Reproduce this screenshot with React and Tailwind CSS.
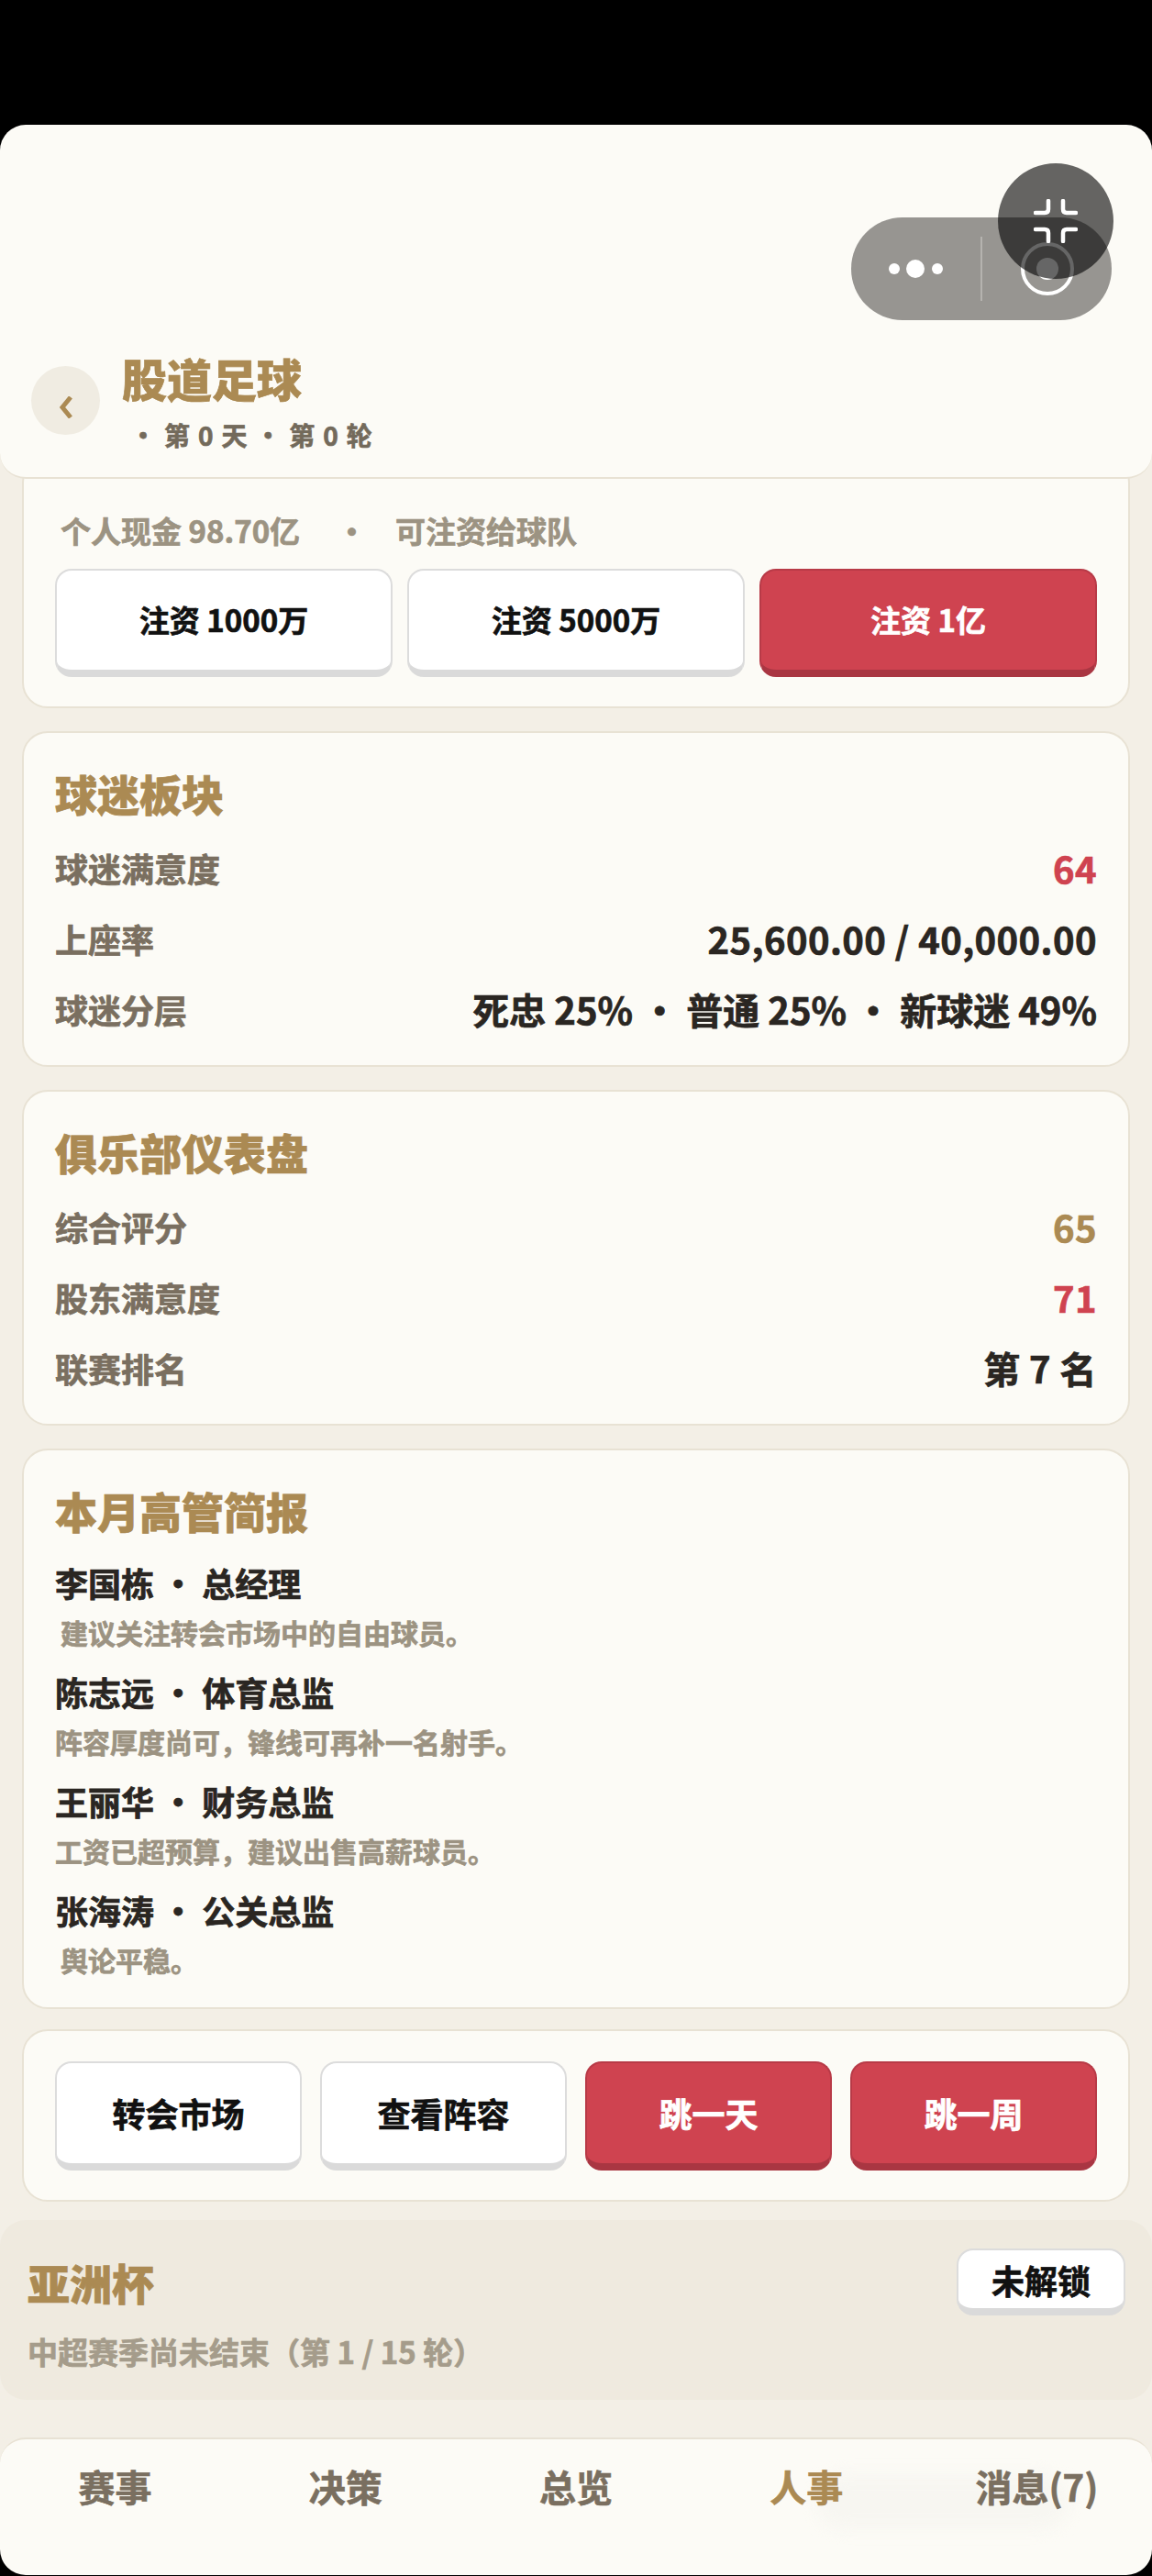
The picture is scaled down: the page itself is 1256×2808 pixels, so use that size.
import React from 'react';

const FONT = "font-['Noto_Sans_CJK_SC','Noto_Sans',sans-serif]";
// the installed CJK font stops at Bold, the reference is heavier
const HEAVY = '[-webkit-text-stroke:0.7px_currentColor]';

function Card({ className = '', children }) {
  return (
    <div className={`mx-6 shrink-0 rounded-[28px] border-2 border-[#e8e2d4] bg-[#fcfbf6] ${className}`}>
      {children}
    </div>
  );
}

function Btn({ red, className = '', children }) {
  return red ? (
    <button className={`rounded-[18px] border-2 border-[#b83a47] border-b-[8px] border-b-[#a93642] bg-[#cf4350] font-bold text-white ${HEAVY} ${className}`}>
      {children}
    </button>
  ) : (
    <button className={`rounded-[18px] border-2 border-[#dcdcdc] border-b-[8px] border-b-[#dadada] bg-white font-bold text-[#111] ${HEAVY} ${className}`}>
      {children}
    </button>
  );
}

function Row({ label, value, color = 'text-[#2a2622]', tight }) {
  return (
    <div className="flex h-[77px] items-center justify-between">
      <span className={`text-[36px] font-bold text-[#7a6f60] ${HEAVY}`}>{label}</span>
      <span className={`text-[40px] font-bold ${tight ? '' : 'tracking-[0.4px]'} ${color} ${HEAVY}`}>{value}</span>
    </div>
  );
}

function Section({ title, rows }) {
  return (
    <Card className="mt-[25px] h-[366px] px-[34px] pt-[29px]">
      <h2 className={`mb-[7px] h-[72px] text-[46px] leading-[72px] font-black text-[#ab8a53] ${HEAVY}`}>{title}</h2>
      {rows.map((r) => (
        <Row key={r.label} {...r} />
      ))}
    </Card>
  );
}

const briefs = [
  { who: '李国栋 · 总经理', say: '建议关注转会市场中的自由球员。', indent: true },
  { who: '陈志远 · 体育总监', say: '阵容厚度尚可，锋线可再补一名射手。' },
  { who: '王丽华 · 财务总监', say: '工资已超预算，建议出售高薪球员。' },
  { who: '张海涛 · 公关总监', say: '舆论平稳。', indent: true },
];

const tabs = ['赛事', '决策', '总览', '人事', '消息(7)'];

export default function App() {
  return (
    <div className={`relative flex h-[2808px] w-[1256px] flex-col overflow-hidden bg-[#f3efe6] ${FONT}`}>
      <div className="h-[136px] shrink-0 bg-black" />

      {/* header */}
      <div className="relative z-10 h-[386px] shrink-0 bg-[linear-gradient(#000_50%,transparent_50%)]">
        <header className="h-full rounded-[28px] border-b-2 border-[#e8e2d4] bg-[#fcfbf6]">
          <div className="flex h-full items-end pb-[24px] pl-[34px]">
            <div className="mb-[22px] flex h-[75px] w-[75px] items-center justify-center rounded-full bg-[#f0ece2]">
              <svg className="mt-[14px]" width="14" height="24" viewBox="0 0 14 24" fill="none">
                <path d="M12 1 L3 12 L12 23" stroke="#ab8a53" strokeWidth="5" />
              </svg>
            </div>
            <div className="ml-[24px]">
              <div className={`text-[49px] leading-[68px] font-black text-[#ab8a53] ${HEAVY}`}>股道足球</div>
              <div className={`mt-[6px] pl-[9px] text-[28px] leading-[44px] font-bold tracking-[1.3px] text-[#736a5b] ${HEAVY}`}>
                · 第 0 天 · 第 0 轮
              </div>
            </div>
          </div>
        </header>
      </div>

      {/* funding */}
      <Card className="-mt-[24px] h-[274px] px-[34px] pt-[24px]">
        <div className={`mt-[25px] flex h-[60px] items-center pl-[6px] text-[33px] font-bold text-[#9c9382] ${HEAVY}`}>
          <span>个人现金 98.70亿</span>
          <span className="ml-[40px]">·</span>
          <span className="ml-[31px]">可注资给球队</span>
        </div>
        <div className="mt-[11px] grid grid-cols-3 gap-[16px]">
          <Btn className="h-[118px] text-[33px]">注资 1000万</Btn>
          <Btn className="h-[118px] text-[33px]">注资 5000万</Btn>
          <Btn red className="h-[118px] text-[33px]">注资 1亿</Btn>
        </div>
      </Card>

      <Section
        title="球迷板块"
        rows={[
          { label: '球迷满意度', value: '64', color: 'text-[#cf4350]' },
          { label: '上座率', value: '25,600.00 / 40,000.00' },
          { label: '球迷分层', value: '死忠 25% · 普通 25% · 新球迷 49%', tight: true },
        ]}
      />
      <Section
        title="俱乐部仪表盘"
        rows={[
          { label: '综合评分', value: '65', color: 'text-[#ab8a53]' },
          { label: '股东满意度', value: '71', color: 'text-[#cf4350]' },
          { label: '联赛排名', value: '第 7 名' },
        ]}
      />

      {/* briefing */}
      <Card className="mt-[25px] h-[611px] px-[34px] pt-[29px]">
        <h2 className={`h-[72px] text-[46px] leading-[72px] font-black text-[#ab8a53] ${HEAVY}`}>本月高管简报</h2>
        <div className="mt-[18px] flex flex-col gap-[15px]">
          {briefs.map((b) => (
            <div key={b.who}>
              <div className={`h-[50px] text-[36px] leading-[50px] font-bold text-[#2a2622] ${HEAVY}`}>{b.who}</div>
              <div className={`mt-[4px] h-[50px] text-[30px] leading-[50px] font-bold text-[#9c9382] ${HEAVY} ${b.indent ? 'pl-[6px]' : ''}`}>
                {b.say}
              </div>
            </div>
          ))}
        </div>
      </Card>

      {/* actions */}
      <Card className="mt-[22px] grid h-[188px] grid-cols-4 items-center gap-[20px] px-[34px]">
        <Btn className="h-[119px] text-[36px]">转会市场</Btn>
        <Btn className="h-[119px] text-[36px]">查看阵容</Btn>
        <Btn red className="h-[119px] text-[36px]">跳一天</Btn>
        <Btn red className="h-[119px] text-[36px]">跳一周</Btn>
      </Card>

      {/* asia cup */}
      <section className="mt-[20px] flex h-[196px] shrink-0 justify-between rounded-[28px] bg-[#efeadf] pr-[29px] pl-[30px]">
        <div>
          <div className={`mt-[31px] text-[46px] leading-[72px] font-black text-[#ab8a53] ${HEAVY}`}>亚洲杯</div>
          <div className={`mt-[15px] text-[33px] leading-[50px] font-bold text-[#a59c8b] ${HEAVY}`}>中超赛季尚未结束（第 1 / 15 轮）</div>
        </div>
        <Btn className="mt-[31px] h-[73px] w-[184px] text-[36px]">未解锁</Btn>
      </section>

      {/* tabs */}
      <div className="mt-[41px] h-[151px] shrink-0 bg-[linear-gradient(transparent_50%,#000_50%)]">
        <nav className="relative flex h-[150px] rounded-[28px] border-t-2 border-[#e8e2d4] bg-[#fcfbf6] pt-[21px]">
          <div className="absolute top-[38px] left-[890px] h-[60px] w-[275px] rounded-full bg-[#f7f6f1] blur-[8px]" />
          {tabs.map((t) => (
            <div
              key={t}
              className={`relative flex-1 text-center text-[40px] leading-[60px] font-bold ${HEAVY} ${t === '人事' ? 'text-[#ab8a53]' : 'text-[#7a6f60]'}`}
            >
              {t}
            </div>
          ))}
        </nav>
      </div>

      {/* wechat capsule + floating button */}
      <div className="absolute top-[237px] left-[928px] z-20 h-[112px] w-[284px] rounded-full bg-[#979591]">
        <svg width="284" height="112" viewBox="0 0 284 112" fill="none">
          <circle cx="47" cy="56" r="6" fill="#fff" />
          <circle cx="70" cy="56" r="10" fill="#fff" />
          <circle cx="94" cy="56" r="6" fill="#fff" />
          <rect x="141" y="21" width="2" height="70" fill="#b5b3af" />
          <circle cx="214" cy="56" r="27" stroke="#fff" strokeWidth="4" />
          <circle cx="214" cy="56" r="12" fill="#fff" />
        </svg>
      </div>
      <div className="absolute top-[178px] left-[1088px] z-30 flex h-[126px] w-[126px] items-center justify-center rounded-full bg-black/60">
        <svg width="48" height="48" viewBox="0 0 48 48" fill="none" stroke="#fff" strokeWidth="4.5" strokeLinecap="round">
          <path d="M16 2 V11 Q16 15 12 15 H2" />
          <path d="M32 2 V11 Q32 15 36 15 H46" />
          <path d="M2 33 H12 Q16 33 16 37 V46" />
          <path d="M46 33 H36 Q32 33 32 37 V46" />
        </svg>
      </div>
    </div>
  );
}
